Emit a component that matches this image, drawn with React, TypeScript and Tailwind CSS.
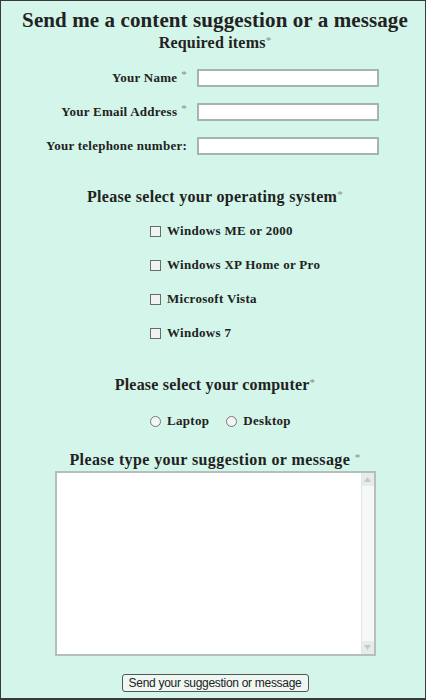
import React from "react";

const serif = "font-['Liberation_Serif','Times_New_Roman',serif]";

const Star = ({ spaced }: { spaced?: boolean }) => (
  <span className={`text-[#8a8a8a] text-[11px] font-normal relative -top-[4px] ${spaced ? "ml-[4px]" : ""}`}>
    *
  </span>
);

const Field = ({ label, required }: { label: string; required?: boolean }) => (
  <div className="flex items-center h-[18px]">
    <label className="w-[182px] text-right text-[13px] font-bold text-[#222] tracking-[0.25px] whitespace-nowrap">
      {label}
      {required && <Star spaced />}
    </label>
    <input
      type="text"
      className="ml-[10px] w-[182px] h-[18px] bg-white border-2 border-[#a7b3ad] outline-none"
    />
  </div>
);

const Check = ({ label }: { label: string }) => (
  <label className="flex items-center h-[20px] gap-[6px] text-[13px] font-bold text-[#222]">
    <span className="w-[11px] h-[11px] border border-[#6b6b6b] bg-[#f1f3f2]" />
    <span className="tracking-[0.3px]">{label}</span>
  </label>
);

const Radio = ({ label }: { label: string }) => (
  <label className="flex items-center h-[20px] gap-[6px] text-[13px] font-bold text-[#222]">
    <span className="w-[11px] h-[11px] rounded-full border border-[#777] bg-[#f4f6f5]" />
    <span className="tracking-[0.3px]">{label}</span>
  </label>
);

export default function App() {
  return (
    <div className={`w-[426px] h-[700px] border border-b-2 border-[#3a3a3a] bg-[#d4f5e9] pl-[4px] flex flex-col items-center ${serif}`}>
      <h1 className="mt-[7px] text-[21px] leading-[24px] font-bold text-[#222] tracking-[0.1px] whitespace-nowrap">
        Send me a content suggestion or a message
      </h1>
      <h2 className="mt-[1px] text-[16px] leading-[20px] font-bold text-[#222] tracking-[0.2px]">
        Required items<Star />
      </h2>

      <div className="self-start mt-[15px] flex flex-col gap-[16px]">
        <Field label="Your Name" required />
        <Field label="Your Email Address" required />
        <Field label="Your telephone number:" />
      </div>

      <h3 className="mt-[32px] text-[16px] leading-[20px] font-bold text-[#222] tracking-[0.3px]">
        Please select your operating system<Star />
      </h3>
      <div className="self-start ml-[145px] mt-[13px] flex flex-col gap-[14px]">
        <Check label="Windows ME or 2000" />
        <Check label="Windows XP Home or Pro" />
        <Check label="Microsoft Vista" />
        <Check label="Windows 7" />
      </div>

      <h3 className="mt-[32px] text-[16px] leading-[20px] font-bold text-[#222] tracking-[0.2px]">
        Please select your computer<Star />
      </h3>
      <div className="self-start ml-[145px] mt-[15px] flex gap-[17px]">
        <Radio label="Laptop" />
        <Radio label="Desktop" />
      </div>

      <h3 className="mt-[19px] text-[16px] leading-[20px] font-bold text-[#222] tracking-[0.4px]">
        Please type your suggestion or message <Star />
      </h3>
      <div className="w-[321px] h-[185px] border-2 border-[#b5c0ba] bg-white flex">
        <textarea className="flex-1 resize-none outline-none bg-white" />
        <div className="w-[13px] flex flex-col justify-between bg-[#f6f8f7] border-l border-[#e3e8e5]">
          <span className="h-[13px] flex items-center justify-center bg-[#e6ece9]">
            <svg width="7" height="5" viewBox="0 0 7 5"><path d="M0 5 L3.5 0 L7 5 Z" fill="#c4ccc8" /></svg>
          </span>
          <span className="h-[13px] flex items-center justify-center bg-[#e6ece9]">
            <svg width="7" height="5" viewBox="0 0 7 5"><path d="M0 0 L3.5 5 L7 0 Z" fill="#c4ccc8" /></svg>
          </span>
        </div>
      </div>

      <button className="mt-[18px] w-[187px] h-[18px] rounded-[3px] border border-[#555] bg-[#eef7f2] font-['Liberation_Sans',Arial,sans-serif] text-[12px] leading-[16px] tracking-[-0.3px] text-[#222]">
        Send your suggestion or message
      </button>
    </div>
  );
}
